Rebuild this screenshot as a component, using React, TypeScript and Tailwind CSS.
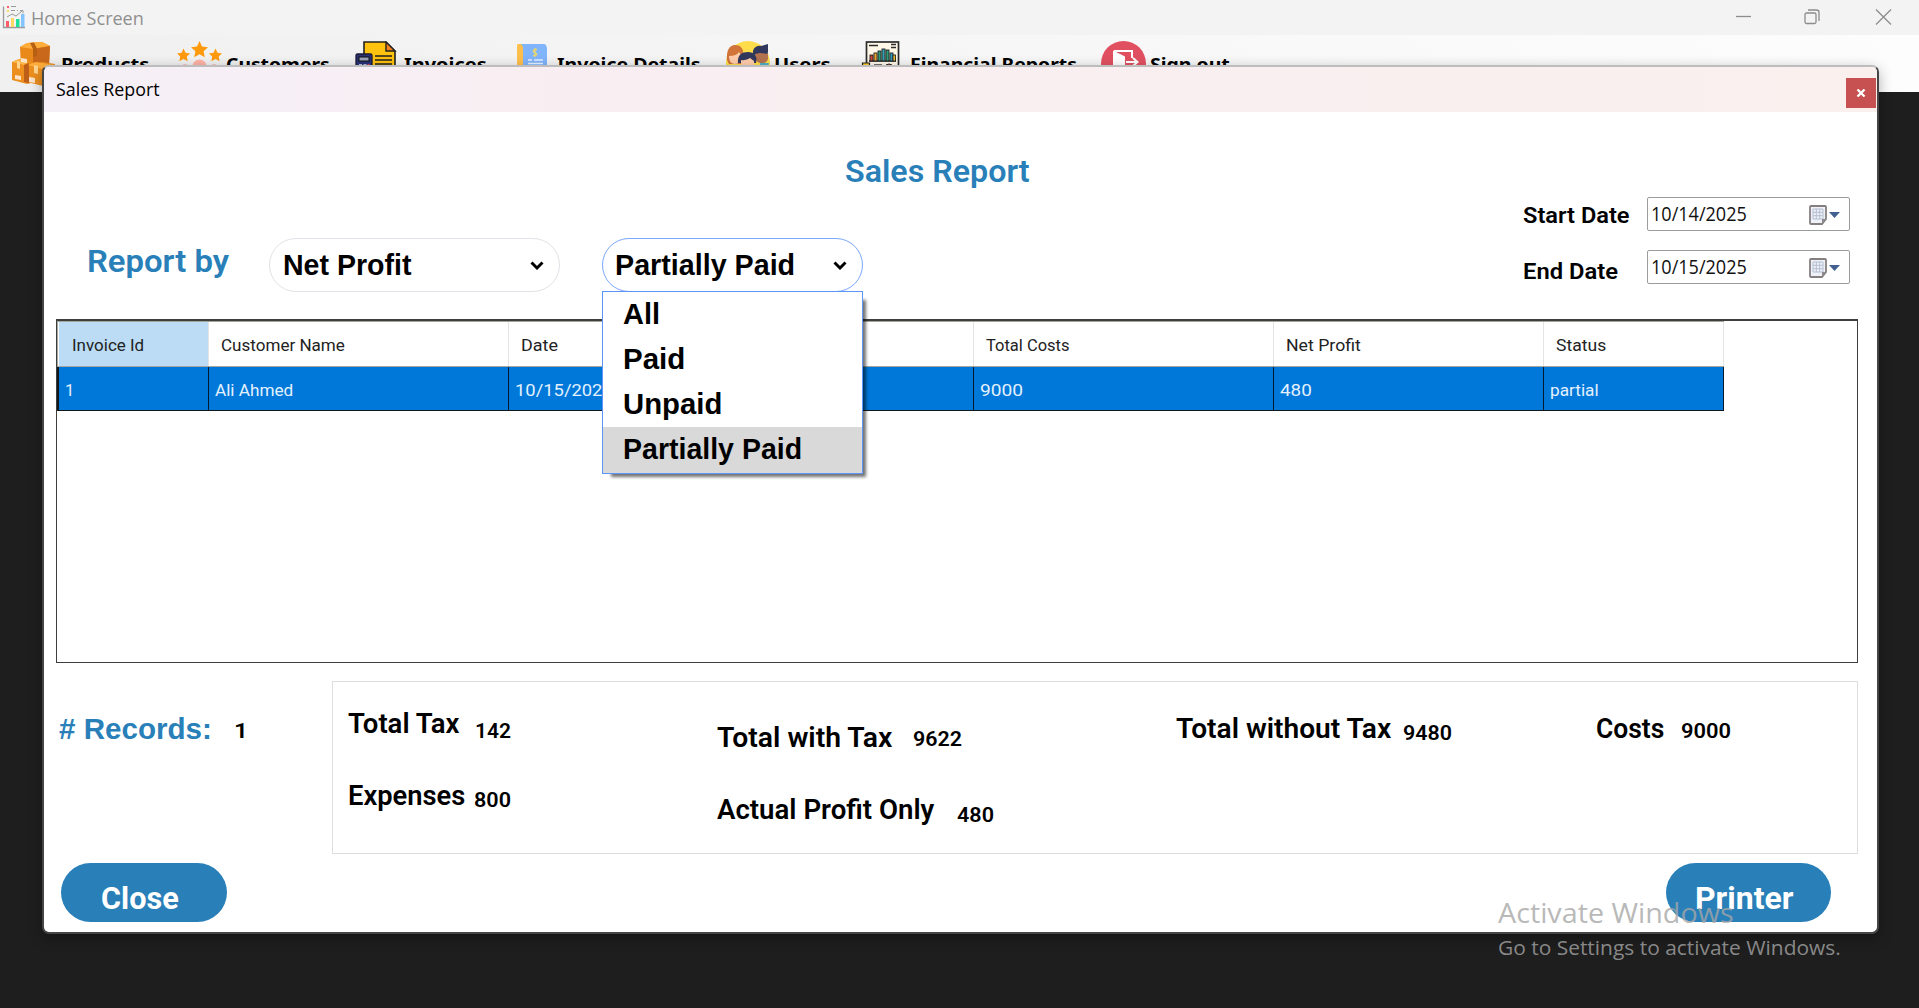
import { useLayoutEffect, useRef, type ReactNode } from "react";

/** Single line of text stretched or condensed to the width of its box. */
function Fit({ className, children }: { className: string; children: ReactNode }) {
  const outer = useRef<HTMLDivElement>(null);
  const inner = useRef<HTMLSpanElement>(null);
  useLayoutEffect(() => {
    const o = outer.current;
    const i = inner.current;
    if (o && i && i.offsetWidth > 0) {
      i.style.transform = `scaleX(${o.clientWidth / i.offsetWidth})`;
    }
  });
  return (
    <div ref={outer} className={`shrink-0 ${className}`}>
      <span ref={inner} className="inline-block origin-left whitespace-nowrap align-top">
        {children}
      </span>
    </div>
  );
}

const AppIcon = () => (
  <svg className="h-[24px] w-[24px] shrink-0" viewBox="0 0 24 24">
    <path d="M1.500 1.500V22.500H23" fill="none" stroke="#9a9a9a" strokeWidth="1.300" />
    <rect x="4" y="16" width="3" height="6" fill="#ff5d6e" />
    <rect x="9" y="13" width="3" height="9" fill="#ffd766" />
    <rect x="14" y="14" width="3.500" height="8" fill="#1fe09a" />
    <rect x="19" y="9" width="3.500" height="13" fill="#82c4ff" />
    <rect x="5" y="1" width="2" height="2" fill="#ff5d6e" />
    <rect x="5" y="5" width="2" height="2" fill="#ffd766" />
    <path d="M9 1.500h5M9 5.500h4M15 5.500h1M5 12l5-3 4 2 6-5M18 5.500h3v3" fill="none" stroke="#9a9a9a" strokeWidth="1" />
  </svg>
);

const BoxesIcon = () => (
  <svg className="h-[45px] w-[45px]" viewBox="0 0 45 45">
    <path d="M8 6l7-4 15-1 8 4-1 19-9 4-19-2z" fill="#e8891a" />
    <path d="M8 6l13 2 17-3-8-4-15 1z" fill="#ffae3b" />
    <path d="M21 8l17-3-1 19-11 4-5-1z" fill="#c9681a" />
    <path d="M18 2l4-.4 3 5.800V15l-4 1V8z" fill="#b75f12" />
    <path d="M0 21l7-3 9 2 8 2 7-1 12 2-1 17-11 5-12-3-4 1L0 39z" fill="#ec8f1e" />
    <path d="M0 21l7-3 9 3-4 3z" fill="#ffb649" />
    <path d="M12 24l5-2v20l-5-1z" fill="#bd5f18" />
    <path d="M16 24l8-3 18 3-12 4z" fill="#ffae3b" />
    <path d="M30 28l12-4v16l-11 5z" fill="#c6651a" />
    <path d="M5 20l3 1v7l-3-1zM22 24l4 1v8l-4-1z" fill="#ffd590" />
    <path d="M9 17l6 1v4l-6-1zM3 34l6 1v4l-6-1zM17 36l6 1v5l-6-1z" fill="#ffe3c8" />
  </svg>
);

const StarsIcon = () => (
  <svg className="h-[45px] w-[45px]" viewBox="0 0 45 45">
    <g fill="#ff9a0d">
      <path d="M22.500 0l2.500 5.500 6 .8-4.400 4 1.200 6-5.300-3-5.300 3 1.200-6-4.400-4 6-.8z" />
      <path d="M6.500 7.500l2 4.300 4.700.6-3.400 3.200.9 4.700-4.200-2.300-4.200 2.300.9-4.700L0 12.400l4.600-.6z" />
      <path d="M38.500 7.500l2 4.300 4.600.6-3.400 3.200.9 4.700-4.100-2.300-4.200 2.300.9-4.700-3.400-3.200 4.700-.6z" />
    </g>
    <circle cx="22.500" cy="25.500" r="7" fill="#ffb3a6" />
    <circle cx="8" cy="28.500" r="5" fill="#ff7f83" />
    <circle cx="37" cy="28.500" r="5" fill="#ff7f83" />
  </svg>
);

const InvoiceIcon = () => (
  <svg className="h-[45px] w-[45px]" viewBox="0 0 45 45">
    <path d="M9 1h22l9 9v34H9z" fill="#ffc20e" stroke="#222" strokeWidth="1.600" />
    <path d="M31 1v9h9z" fill="#f58220" stroke="#222" strokeWidth="1.400" />
    <path d="M20 15h17M20 19h17M20 23h17" stroke="#222" strokeWidth="1.300" />
    <rect x="1" y="13" width="16" height="26" rx="1.500" fill="#2b3277" stroke="#1b1b33" strokeWidth="1.300" />
    <rect x="4" y="16" width="10" height="4" fill="#9aa3b8" stroke="#111" />
    <path d="M4 24h3M8.500 24h3" stroke="#b6bfd5" strokeWidth="2" />
    <path d="M12.500 24h2" stroke="#e54848" strokeWidth="2" />
  </svg>
);

const DetailsIcon = () => (
  <svg className="h-[45px] w-[45px]" viewBox="0 0 45 45">
    <path d="M10 3h5v24H9V7c0-2 0-4 1-4z" fill="#ffbf4d" />
    <path d="M12 3h23c3 0 4 2 4 5v34H15V8c0-3-1-5-3-5z" fill="#80b4fb" />
    <path d="M29 8.500c-4-1-5 2.500-2 3.300s2 3.400-2 2.600M27 7v9" fill="none" stroke="#e8d66a" strokeWidth="1.300" />
    <path d="M20 19h4M26 19h9M20 22.500h15" stroke="#e8f2ff" strokeWidth="1.600" />
  </svg>
);

const UsersIcon = () => (
  <svg className="h-[45px] w-[45px]" viewBox="0 0 45 45">
    <circle cx="23" cy="22" r="22" fill="#ffdd4a" />
    <path d="M2 19C1 9 5 4 10 4s9 3 8 10l-2 9H4z" fill="#d0743a" />
    <path d="M4 15c4 0 8-1 10-4l3 5c0 4-3 7-7 7s-6-3-6-8z" fill="#ffcdaa" />
    <path d="M28 14c-1-6 3-10 8-9l7-2v8l-1 4z" fill="#32385c" />
    <path d="M30 13l5-1 8 1v5c-1 5-9 6-12 1z" fill="#b5734f" />
    <path d="M13 22c-1-8 4-11 10-11s10 4 8 11z" fill="#32385c" />
    <path d="M16 19c5 1 9-2 9-2l4 3v6H16z" fill="#ffcdaa" />
    <path d="M1 24h9v8H3zM35 22h9l-2 8h-7z" fill="#4bb2c1" />
  </svg>
);

const ReportIcon = () => (
  <svg className="h-[45px] w-[45px]" viewBox="0 0 45 45">
    <rect x="5.500" y="1" width="32" height="38" fill="#fff7e8" stroke="#2c2c2c" strokeWidth="1.700" />
    <path d="M8 4.500h9M30 3.500h5M30 6.500h5" stroke="#2c2c2c" strokeWidth="1.300" />
    <path d="M8 20h27" stroke="#222" strokeWidth="1.500" />
    <g stroke="#222" strokeWidth=".9">
      <rect x="9" y="14" width="3" height="6" fill="#d24637" />
      <rect x="13" y="12" width="3" height="8" fill="#f0a92f" />
      <rect x="17" y="10" width="3" height="10" fill="#2f9d79" />
      <rect x="21" y="8" width="3" height="12" fill="#36a3b5" />
      <rect x="25" y="9" width="3" height="11" fill="#2f9d79" />
      <rect x="29" y="12" width="3" height="8" fill="#349cc0" />
      <rect x="32" y="14" width="2.500" height="6" fill="#f0c22f" />
    </g>
    <path d="M1.500 22h7v5h-7z" fill="#ffd02e" stroke="#222" strokeWidth="1.200" />
    <path d="M13 24h8" stroke="#444" strokeWidth="1.500" />
    <circle cx="28" cy="27" r="4" fill="#e5634e" stroke="#222" />
  </svg>
);

const SignOutIcon = () => (
  <svg className="h-[45px] w-[45px]" viewBox="0 0 45 45">
    <circle cx="22.500" cy="22.500" r="22.500" fill="#e15060" />
    <path d="M13 10h18v7M31 25v5H22" fill="none" stroke="#fff" strokeWidth="2" />
    <path d="M12 9.500l12 6v19l-12-6z" fill="#fff" />
    <path d="M25 21h11M32 17l4.500 4-4.500 4" fill="none" stroke="#fff" strokeWidth="2" />
  </svg>
);

const menu = [
  { label: "Products", icon: <BoxesIcon />, item: "ml-[12px]", text: "w-[88px]" },
  { label: "Customers", icon: <StarsIcon />, item: "ml-[28px]", text: "w-[104px]" },
  { label: "Invoices", icon: <InvoiceIcon />, item: "ml-[25px]", text: "w-[83px]" },
  { label: "Invoice Details", icon: <DetailsIcon />, item: "ml-[21px]", text: "w-[144px]" },
  { label: "Users", icon: <UsersIcon />, item: "ml-[24px]", text: "w-[56px]" },
  { label: "Financial Reports", icon: <ReportIcon />, item: "ml-[31px]", text: "w-[167px]" },
  { label: "Sign out", icon: <SignOutIcon />, item: "ml-[24px]", text: "w-[80px]" },
];

const columns = [
  { head: "Invoice Id", cell: "1", col: "w-[150px]", headText: "w-[72px]", cellText: "w-[9px]" },
  { head: "Customer Name", cell: "Ali Ahmed", col: "w-[300px]", headText: "w-[124px]", cellText: "w-[78px]" },
  { head: "Date", cell: "10/15/2025", col: "w-[230px]", headText: "w-[37px]", cellText: "w-[98px]" },
  { head: "Total", cell: "9480", col: "w-[235px]", headText: "w-[40px]", cellText: "w-[43px]" },
  { head: "Total Costs", cell: "9000", col: "w-[300px]", headText: "w-[84px]", cellText: "w-[43px]" },
  { head: "Net Profit", cell: "480", col: "w-[270px]", headText: "w-[75px]", cellText: "w-[32px]" },
  { head: "Status", cell: "partial", col: "w-[180px]", headText: "w-[50px]", cellText: "w-[49px]" },
];

const Chevron = () => (
  <svg className="h-[10px] w-[14px] shrink-0" viewBox="0 0 14 10">
    <path d="M1.500 2.500L7 8l5.500-5.500" fill="none" stroke="#000" strokeWidth="2.900" />
  </svg>
);

function DateField({ value }: { value: string }) {
  return (
    <div className="flex h-[34px] w-[203px] rounded-[2px] border-[1.500px] border-[#9c9c9c] bg-white pl-[3px]">
      <Fit className='w-[96px] font-["Open_Sans",sans-serif] text-[20.500px] leading-[31px] text-[#111]'>{value}</Fit>
      <svg className="ml-[62px] mt-[7px] h-[21px] w-[32px]" viewBox="0 0 32 21">
        <path d="M2 1h14q1 0 1 1v12l-4 5H2q-1 0-1-1V2q0-1 1-1z" fill="#eef1f7" stroke="#857f80" strokeWidth="1.800" />
        <path d="M4 4h10v10H4zM7.300 4v10M10.700 4v10M4 7.300h10M4 10.700h10" fill="none" stroke="#b4bfd2" strokeWidth="1" />
        <path d="M17 14h-4v5z" fill="#8e8a90" />
        <path d="M20 7h11l-5.500 6z" fill="#42608f" />
      </svg>
    </div>
  );
}

const big = 'font-["Roboto",sans-serif] text-[28px] font-semibold leading-[38px] text-black';
const num = 'font-["Roboto",sans-serif] text-[21px] font-semibold leading-[30px] text-black';

export default function App() {
  return (
    <div className='relative flex h-[1008px] w-[1919px] flex-col overflow-hidden bg-[#1e1e1e] font-["Noto_Sans",sans-serif]'>
      <header className="flex h-[35px] shrink-0 bg-[#f3f3f3] pl-[2px] pt-[5px]">
        <AppIcon />
        <Fit className='ml-[5px] w-[113px] font-["Open_Sans",sans-serif] text-[18.500px] leading-[26px] text-[#8f8f8f]'>
          Home Screen
        </Fit>
        <svg className="ml-auto mr-[27px] mt-[4px] h-[16px] w-[157px]" viewBox="0 0 157 16" fill="none" stroke="#8c8c8c" strokeWidth="1.300">
          <path d="M1 7.500h15" />
          <rect x="70" y="4" width="11" height="10.500" rx="1.500" />
          <path d="M73 1h8.500q2.500 0 2.500 2.500V12" />
          <path d="M141 .5l15 15M156 .5l-15 15" />
        </svg>
      </header>

      <nav className="flex h-[57px] shrink-0 bg-linear-to-r from-[#f0f0f0] to-[#fdfdfd]">
        {menu.map((m) => (
          <div key={m.label} className={`flex shrink-0 ${m.item}`}>
            <div className="mt-[6px] w-[45px] shrink-0">{m.icon}</div>
            <Fit className={`ml-[4px] mt-[17px] text-[18px] font-bold leading-[24px] text-black ${m.text}`}>{m.label}</Fit>
          </div>
        ))}
      </nav>

      <section className="absolute left-[42px] top-[65px] flex h-[869px] w-[1837px] flex-col rounded-[7px] border-2 border-[#454545] border-t-[#bdbdbd] bg-white shadow-[0_4px_14px_rgba(0,0,0,0.3)]">
        <div className="flex h-[45px] shrink-0 rounded-t-[5px] bg-linear-to-r from-[#f5f0f7] via-[#f9eef1] via-35% to-[#faf0ee] pl-[12px]">
          <Fit className='mt-[9px] w-[104px] font-["Open_Sans",sans-serif] text-[18.500px] leading-[26px] text-black'>Sales Report</Fit>
          <div className="ml-auto mr-[1px] mt-[11px] flex h-[30px] w-[30px] items-center justify-center bg-[#c75050]">
            <svg className="h-[8px] w-[10px]" viewBox="0 0 10 8">
              <path d="M1.500 .5l7 7M8.500 .5l-7 7" stroke="#fff" strokeWidth="2.300" />
            </svg>
          </div>
        </div>

        <div className="h-[84px] shrink-0 pl-[801px] pt-[40px]">
          <Fit className='w-[185px] font-["Roboto",sans-serif] text-[31px] font-semibold leading-[40px] text-[#2980b9]'>Sales Report</Fit>
        </div>

        <div className="flex h-[123px] shrink-0 items-start pl-[43px]">
          <Fit className='mt-[46px] w-[142px] font-["Roboto",sans-serif] text-[31px] font-semibold leading-[40px] text-[#2980b9]'>Report by</Fit>
          <div className="ml-[40px] mt-[42px] flex h-[54px] w-[291px] shrink-0 items-center justify-between rounded-full border-[1.500px] border-[#e2e2e8] pl-[13px] pr-[15px]">
            <Fit className='w-[129px] font-["Liberation_Sans",sans-serif] text-[29px] font-bold leading-[50px] text-black'>Net Profit</Fit>
            <Chevron />
          </div>
          <div className="relative ml-[42px] mt-[42px] flex h-[54px] w-[261px] shrink-0 items-center justify-between rounded-full border-[1.500px] border-[#7ba7ff] pl-[12px] pr-[15px]">
            <Fit className='w-[180px] font-["Liberation_Sans",sans-serif] text-[29px] font-bold leading-[50px] text-black'>Partially Paid</Fit>
            <Chevron />
            <div className='absolute -left-px top-[52px] z-10 h-[183px] w-[261px] border border-[#5b95f9] bg-white font-["Liberation_Sans",sans-serif] text-[29px] font-bold leading-[45px] text-black shadow-[6px_6px_3px_-3px_rgba(0,0,0,0.55)]'>
              <div className="h-[45px] pl-[20px]"><Fit className="w-[37px]">All</Fit></div>
              <div className="h-[45px] pl-[20px]"><Fit className="w-[62px]">Paid</Fit></div>
              <div className="h-[45px] pl-[20px]"><Fit className="w-[99px]">Unpaid</Fit></div>
              <div className="h-[46px] bg-[#d9d9d9] pl-[20px]"><Fit className="w-[179px]">Partially Paid</Fit></div>
            </div>
          </div>
          <div className="ml-auto mr-[27px] mt-[1px] flex flex-col gap-[19px]">
            <div className="flex h-[34px]">
              <Fit className='mt-[1px] w-[107px] font-["Roboto",sans-serif] text-[22.500px] font-semibold leading-[34px] text-black'>Start Date</Fit>
              <div className="ml-[17px]"><DateField value="10/14/2025" /></div>
            </div>
            <div className="flex h-[34px]">
              <Fit className='mt-[4px] w-[95px] font-["Roboto",sans-serif] text-[22.500px] font-semibold leading-[34px] text-black'>End Date</Fit>
              <div className="ml-[29px]"><DateField value="10/15/2025" /></div>
            </div>
          </div>
        </div>

        <div className='ml-[12px] h-[344px] w-[1802px] shrink-0 border border-t-2 border-[#3c3f3c] font-["Roboto",sans-serif] text-[16.500px]'>
          <div className="flex h-[46px] w-[1667px] border-b border-l border-t border-[#a5a5a0] pl-[1px]">
            {columns.map((c, i) => (
              <div key={c.head} className={`shrink-0 overflow-hidden border-r border-[#e4e4e4] text-[#222] ${c.col} ${i === 0 ? "bg-[#bbdcf4] pl-[13px]" : "bg-white pl-[12px]"}`}>
                <Fit className={`mt-[2px] leading-[44px] ${c.headText}`}>{c.head}</Fit>
              </div>
            ))}
          </div>
          <div className="flex h-[44px] w-[1667px] border-b-[1.500px] border-l-2 border-[#10171d] bg-[#0078d9]">
            {columns.map((c) => (
              <div key={c.head} className={`shrink-0 overflow-hidden border-r-[1.500px] border-[#04192c] pl-[6px] text-[#e4f1fd] ${c.col}`}>
                <Fit className={`mt-[2px] leading-[44px] ${c.cellText}`}>{c.cell}</Fit>
              </div>
            ))}
          </div>
        </div>

        <div className="flex h-[199px] shrink-0 items-start">
          <Fit className='ml-[15px] mt-[48px] w-[153px] font-["Liberation_Sans",sans-serif] text-[29px] font-bold leading-[37px] text-[#2980b9]'># Records:</Fit>
          <Fit className={`ml-[22px] mt-[53px] w-[14px] ${num}`}>1</Fit>
          <div className="ml-[84px] mt-[18px] flex h-[173px] w-[1526px] items-start border-[1.500px] border-[#dedede]">
            <div className="flex w-[369px] shrink-0 flex-col pl-[15px]">
              <div className="mt-[23px] flex h-[72px]">
                <Fit className={`w-[111px] ${big}`}>Total Tax</Fit>
                <Fit className={`ml-[16px] mt-[11px] w-[36px] ${num}`}>142</Fit>
              </div>
              <div className="flex">
                <Fit className={`w-[117px] ${big}`}>Expenses</Fit>
                <Fit className={`ml-[9px] mt-[8px] w-[37px] ${num}`}>800</Fit>
              </div>
            </div>
            <div className="flex w-[474px] shrink-0 flex-col pl-[15px]">
              <div className="mt-[37px] flex h-[72px]">
                <Fit className={`w-[175px] ${big}`}>Total with Tax</Fit>
                <Fit className={`ml-[21px] mt-[5px] w-[49px] ${num}`}>9622</Fit>
              </div>
              <div className="flex">
                <Fit className={`w-[217px] ${big}`}>Actual Profit Only</Fit>
                <Fit className={`ml-[23px] mt-[9px] w-[37px] ${num}`}>480</Fit>
              </div>
            </div>
            <div className="mt-[28px] flex w-[420px] shrink-0">
              <Fit className={`w-[215px] ${big}`}>Total without Tax</Fit>
              <Fit className={`ml-[12px] mt-[8px] w-[49px] ${num}`}>9480</Fit>
            </div>
            <div className="mt-[28px] flex shrink-0">
              <Fit className={`w-[68px] ${big}`}>Costs</Fit>
              <Fit className={`ml-[17px] mt-[6px] w-[50px] ${num}`}>9000</Fit>
            </div>
          </div>
        </div>

        <div className="flex h-[61px] shrink-0 justify-between pl-[17px] pr-[46px] pt-[1px] text-white">
          <div className="h-[59px] w-[166px] rounded-full bg-[#2980b9] pl-[40px] pt-[16px]">
            <Fit className='w-[78px] font-["Roboto",sans-serif] text-[31px] font-bold leading-[40px]'>Close</Fit>
          </div>
          <div className="h-[59px] w-[165px] rounded-full bg-[#2980b9] pl-[29px] pt-[16px]">
            <Fit className='w-[99px] font-["Roboto",sans-serif] text-[31px] font-bold leading-[40px]'>Printer</Fit>
          </div>
        </div>
      </section>

      <div className='pointer-events-none absolute left-[1498px] top-[894px] z-20 font-["Open_Sans",sans-serif] text-[#a6a6a6]/80'>
        <Fit className="w-[236px] text-[27px] leading-[38px]">Activate Windows</Fit>
        <Fit className="mt-[2px] w-[343px] text-[20px] leading-[28px]">Go to Settings to activate Windows.</Fit>
      </div>
    </div>
  );
}
